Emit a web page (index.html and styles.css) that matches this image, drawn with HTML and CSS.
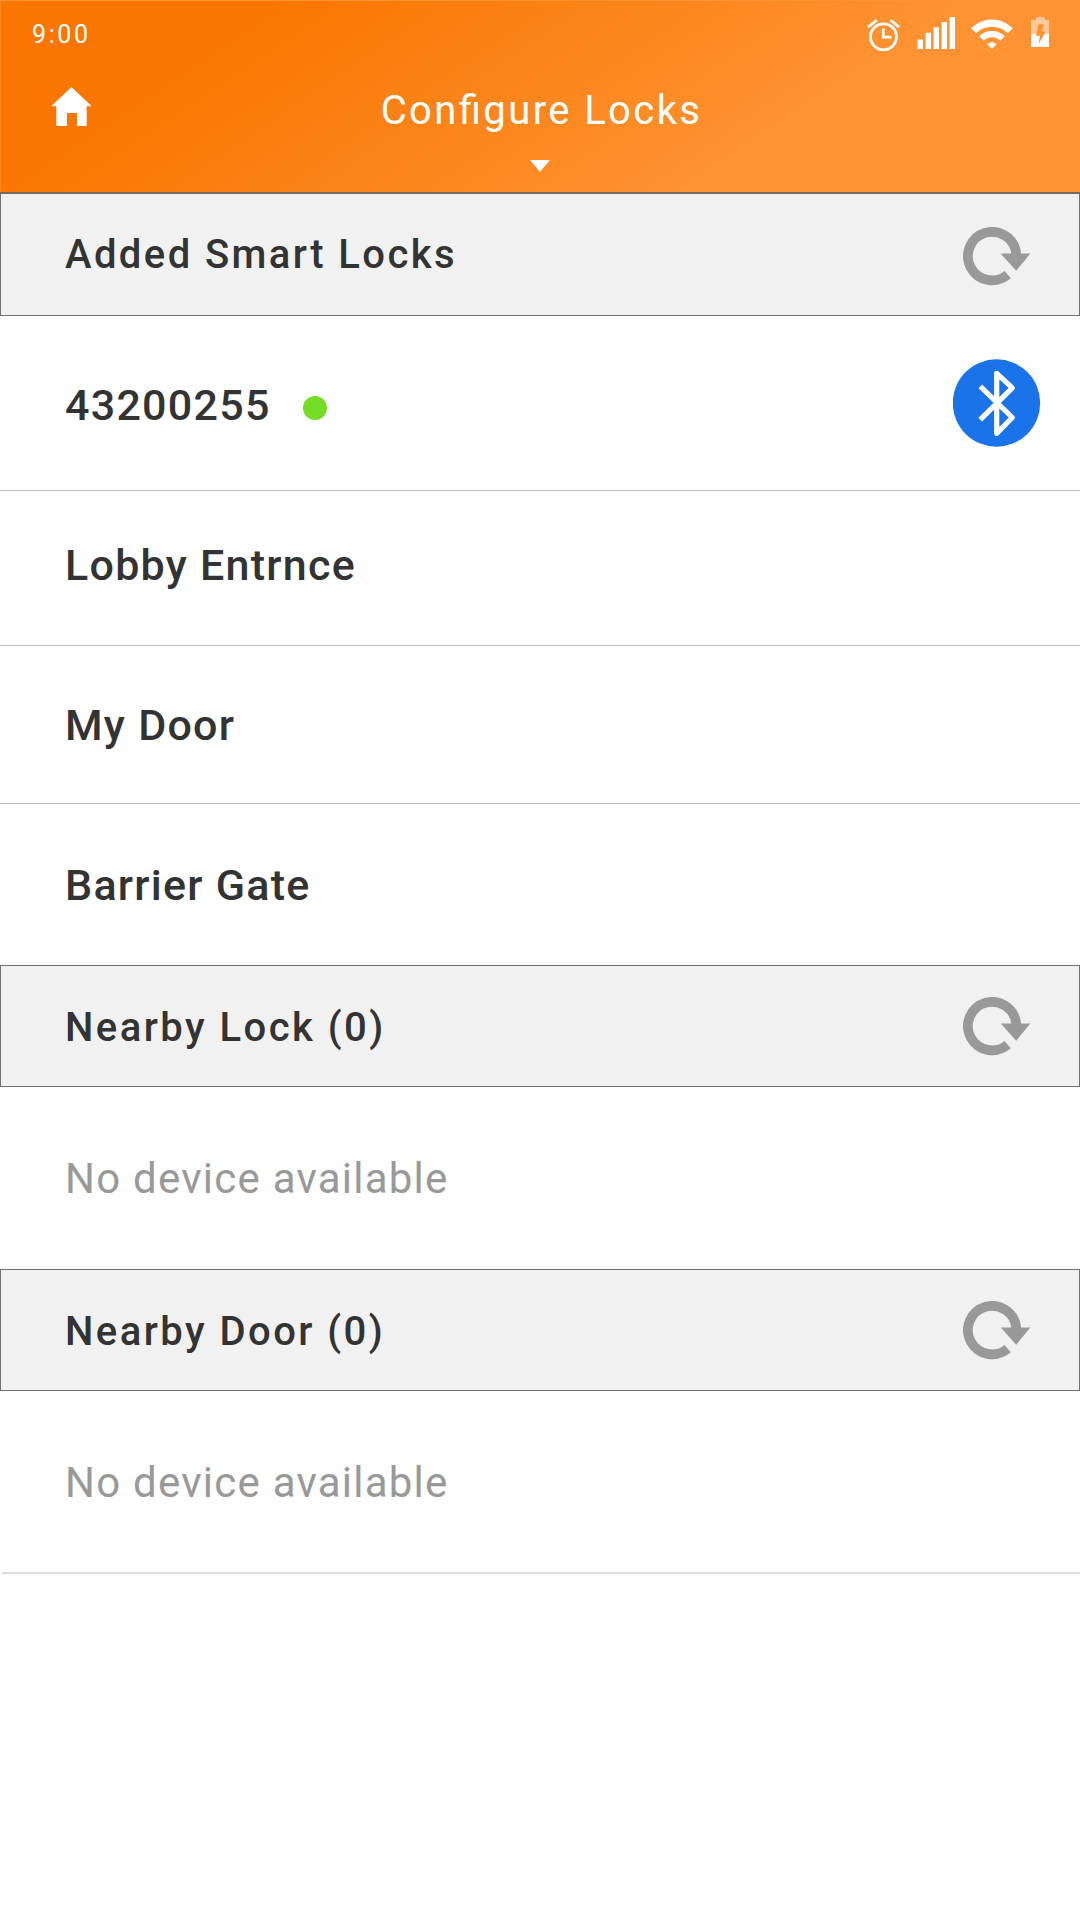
FILE: index.html
```
<!DOCTYPE html>
<html lang="en">
<head>
<meta charset="utf-8">
<title>Configure Locks</title>
<link rel="stylesheet" href="styles.css">
</head>
<body>
<svg class="defs" aria-hidden="true">
  <symbol id="refresh" viewBox="0 0 68 60">
    <path d="M53.2 28V27A24.2 24.2 0 1 0 44.7 47.6" fill="none" stroke="#999" stroke-width="9.7"/>
    <path d="M37.7 26.6H67.3L53.2 43.8Z" fill="#999"/>
  </symbol>
</svg>
<header class="top">
  <div class="status">
    <span class="time">9:00</span>
    <svg class="status-icons" viewBox="864 14 190 40" fill="#fff">
      <g fill="none" stroke="#fff" stroke-width="2.8">
        <circle cx="883.5" cy="36.8" r="13"/>
        <path d="M883.3 28.5V37.2H891.5M868 27.2L876.8 20.2M890.4 20.2L899.2 27.2"/>
      </g>
      <path d="M917.6 39.5h5.4V49h-5.4zM925.6 32.7h5.4V49h-5.4zM933.6 27.3h5.4V49h-5.4zM941.6 22h5.4v27h-5.4zM949.6 17h5.4v32h-5.4z"/>
      <path d="M992 49l-4.7-4.7a6.7 6.7 0 0 1 9.4 0z"/>
      <path d="M979.2 36.2a18.1 18.1 0 0 1 25.6 0l-4.5 4.5a11.7 11.7 0 0 0-16.6 0z"/>
      <path d="M971.2 28.2a29.4 29.4 0 0 1 41.6 0l-5 5a22.4 22.4 0 0 0-31.6 0z"/>
      <path opacity=".5" d="M1036 17h8.7v3h4.4v13.6h-18V20h4.9z"/>
      <path d="M1031.1 33.6h18V47h-18z"/>
      <path fill="#ff9130" d="M1038.5 24.3h5.5l-2 7.3h3.6l-7 12.4 1.4-8.3h-4z"/>
    </svg>
  </div>
  <div class="bar">
    <svg class="home" viewBox="0 0 40 40" fill="#fff"><path d="M19.5 0L39 18.6V19.2H34.7V38.2Q34.7 39 34 39H25V26H15V39H5.2Q4.3 39 4.3 38.2V19.2H0V18.4Z"/></svg>
    <h1 class="title">Configure Locks</h1>
  </div>
  <svg class="caret" viewBox="0 0 20 12" fill="#fff"><path d="M0 0H20L10 12Z"/></svg>
</header>
<main>
  <section>
    <div class="section-head first"><h2 class="label">Added Smart Locks</h2><svg class="refresh"><use href="#refresh"/></svg></div>
    <div class="row connected">
      <span class="name">43200255</span><span class="dot"></span>
      <svg class="bluetooth" viewBox="0 0 88 88"><circle cx="43.5" cy="44" r="43.7" fill="#1a73e8"/><path d="M27.3 27.3L59.3 58.5L43.7 74.3V14.3L59.3 28.8L27.3 60.6" fill="none" stroke="#fff" stroke-width="5.2" stroke-linejoin="round"/></svg>
    </div>
    <div class="row lobby"><span class="name">Lobby Entrnce</span></div>
    <div class="row door"><span class="name">My Door</span></div>
    <div class="row last"><span class="name">Barrier Gate</span></div>
  </section>
  <section>
    <div class="section-head"><h2 class="label">Nearby Lock (0)</h2><svg class="refresh"><use href="#refresh"/></svg></div>
    <p class="empty">No device available</p>
  </section>
  <section>
    <div class="section-head"><h2 class="label">Nearby Door (0)</h2><svg class="refresh"><use href="#refresh"/></svg></div>
    <p class="empty closing">No device available</p>
  </section>
</main>
</body>
</html>
```
FILE: styles.css
```
* { box-sizing: border-box; }
body { margin: 0; width: 1080px; height: 1920px; background: #fefefe; color: #333; font-family: Roboto, sans-serif; }
h1, h2, p { margin: 0; font-weight: 400; }
svg { display: block; flex: none; }
.defs { width: 0; height: 0; position: absolute; }
.top { height: 192px; background: linear-gradient(146deg, #f97600 19.5%, #ff9333 73%); color: #fff; border-top: 1px solid #ff9435; border-left: 1px solid #fd8a20; }
.status { height: 65px; display: flex; justify-content: space-between; padding: 13px 26px 0 31px; }
.time { font-size: 25px; line-height: 41px; letter-spacing: 2.6px; }
.status-icons { width: 190px; height: 40px; }
.bar { height: 94px; display: grid; grid-template-columns: 51px 1fr 51px; padding-top: 21px; }
.home { width: 40px; height: 40px; margin-left: 51px; }
.title { grid-column: 2; grid-row: 1; font-size: 40px; line-height: 48px; text-align: center; letter-spacing: 2.4px; padding-left: 2px; font-feature-settings: "liga" 1; }
.caret { width: 20px; height: 12px; margin-left: 529px; }
.section-head { height: 122px; display: flex; align-items: center; justify-content: space-between; padding: 3px 48px 0 64px; border: 1px solid #707070; background: #f1f1f1; }
.section-head.first { height: 124px; border-top: 2px solid #756a60; padding-top: 0; }
.label { font-size: 40px; font-weight: 500; line-height: 48px; letter-spacing: 2.45px; }
.first .label { letter-spacing: 2.4px; }
.refresh { width: 68px; height: 60px; margin-top: -1px; }
.first .refresh { margin-top: 4px; }
.row { display: flex; align-items: center; padding-left: 65px; border-bottom: 1px solid #bdbdbd; }
.connected { height: 175px; }
.connected .name { margin-top: 3px; }
.lobby { height: 155px; padding-bottom: 6px; }
.door { height: 158px; }
.last { height: 161px; border: 0; }
.name { font-size: 43px; font-weight: 500; line-height: 52px; letter-spacing: 1.26px; }
.dot { width: 24px; height: 24px; border-radius: 50%; background: #75dc26; margin: 10px 0 0 32.5px; }
.bluetooth { width: 88px; height: 88px; margin: 0 39px 0 auto; }
.empty { height: 182px; line-height: 184px; padding-left: 65px; font-size: 42px; letter-spacing: 1.24px; color: #999; }
.closing { height: 183px; margin-left: 2px; padding-left: 63px; border-bottom: 2px solid #ddd; }
```
